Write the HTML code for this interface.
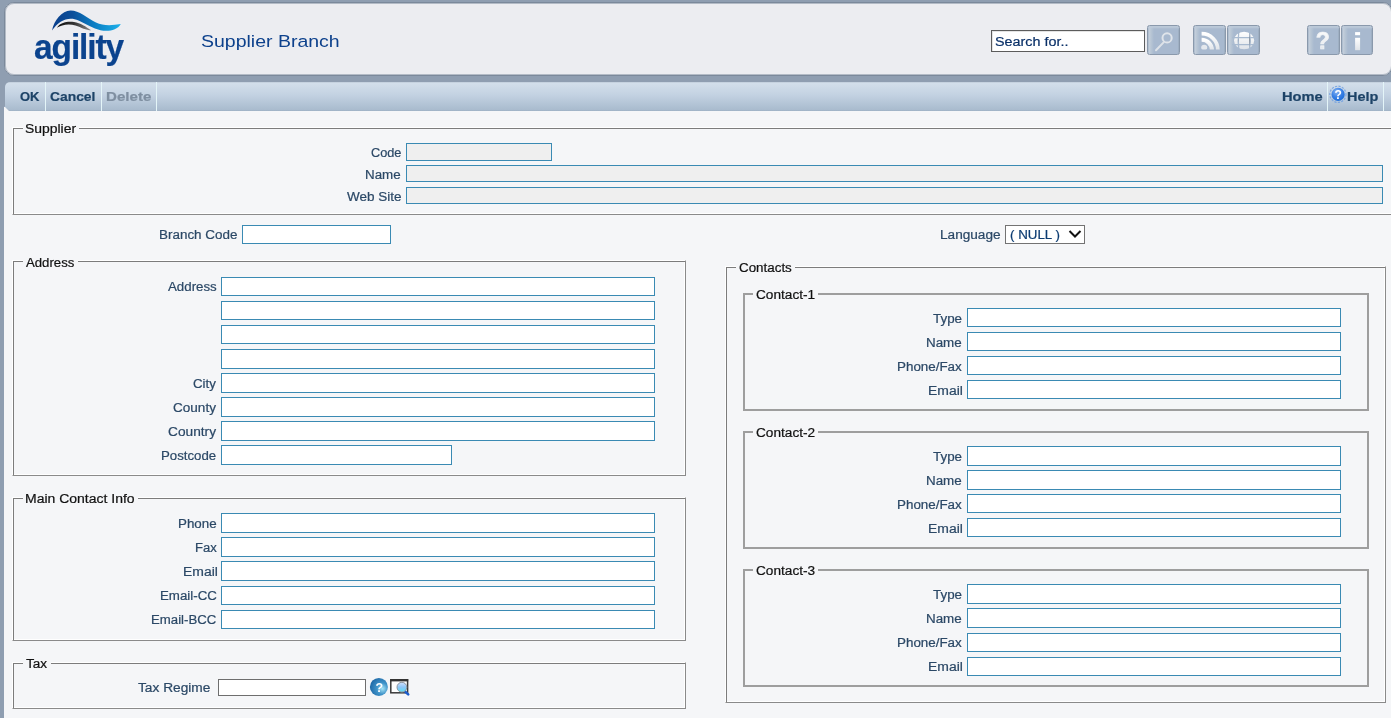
<!DOCTYPE html>
<html><head><meta charset="utf-8">
<style>
html,body{margin:0;padding:0;}
body{width:1391px;height:718px;overflow:hidden;position:relative;background:#8f9eb1;font-family:"Liberation Sans",sans-serif;}
.abs{position:absolute;}
.t{position:absolute;white-space:pre;line-height:1;display:block;transform-origin:0 0;-webkit-font-smoothing:antialiased;will-change:transform;-webkit-text-stroke:0.2px currentColor;}
#hdr{position:absolute;left:4px;top:2px;width:1387px;height:72px;background:#ecedf1;border-radius:10px;border:1px solid #7b899b;box-shadow:inset 0 0 0 1px #b3bbc6;}
#tb{position:absolute;left:5px;top:82px;width:1420px;height:29px;border-top-left-radius:5px;background:linear-gradient(#b9c6d4,#d3dfeb 1px,#c3d2e2 45%,#a9bbce 96%,#9cafc3);}
.sep{position:absolute;top:82px;width:1px;height:29px;background:#e4f5f8;}
#content{position:absolute;left:4px;top:111px;width:1400px;height:620px;background:#f5f6f8;}
.fs{position:absolute;box-sizing:border-box;border:1px solid;border-color:#fff #8a8a8a #8a8a8a #fff;box-shadow:inset 1px 1px 0 #7c7c7c,inset -1px -1px 0 #fff;}
.fs2{position:absolute;box-sizing:border-box;border:2px solid #9e9e9e;}
.lg{position:absolute;background:#f5f6f8;}
.i{position:absolute;box-sizing:border-box;border:1px solid #3a8ab3;background:#fff;}
.i.g{background:#efefef;}
.ig{position:absolute;box-sizing:border-box;border:1px solid #6e6e6e;background:#fff;}
.sel{position:absolute;box-sizing:border-box;border:1px solid #737373;background:#fff;}
.ic{position:absolute;left:-1px;top:-1px;will-change:transform;}
.hb{position:absolute;top:25px;width:33px;height:30px;box-sizing:border-box;border:1px solid #8a99ac;border-radius:2.5px;background:linear-gradient(90deg,#a6b7cb 0,#c2cdda 1.5px,#b8c6d5 3px,#a8b9cf 6px);box-shadow:inset 0 3px 2px -1px #bdcad9,inset -1px 0 0 #9cadc1;}
</style></head><body>
<div id="hdr"></div>
<div id="tb"></div>
<div id="content"></div>
<svg style="position:absolute;left:4px;top:105px" width="6" height="6" viewBox="0 0 6 6"><path d="M0 6 V2 Q0.6 1.6 1.2 2.2 L5 6 Z" fill="#f5f6f8"/></svg>
<div class="fs" style="left:12px;top:127px;width:1389px;height:88px"></div>
<div class="lg" style="left:23px;top:126px;width:56px;height:5px"></div>
<div class="i g" style="left:406px;top:143px;width:146px;height:18px"></div>
<div class="i g" style="left:406px;top:165px;width:977px;height:17px"></div>
<div class="i g" style="left:406px;top:187px;width:977px;height:17px"></div>
<div class="i" style="left:242px;top:225px;width:149px;height:19px"></div>
<div class="sel" style="left:1005px;top:225px;width:80px;height:19px"></div>
<svg style="position:absolute;left:1068px;top:229px" width="14" height="10" viewBox="0 0 14 10"><path d="M1.5 2 L7 7.5 L12.5 2" fill="none" stroke="#111" stroke-width="2"/></svg>
<div class="fs" style="left:12px;top:260px;width:674px;height:216px"></div>
<div class="lg" style="left:23px;top:259px;width:55px;height:5px"></div>
<div class="i" style="left:221px;top:277px;width:434px;height:19px"></div>
<div class="i" style="left:221px;top:301px;width:434px;height:19px"></div>
<div class="i" style="left:221px;top:325px;width:434px;height:19px"></div>
<div class="i" style="left:221px;top:349px;width:434px;height:20px"></div>
<div class="i" style="left:221px;top:373px;width:434px;height:20px"></div>
<div class="i" style="left:221px;top:397px;width:434px;height:20px"></div>
<div class="i" style="left:221px;top:421px;width:434px;height:20px"></div>
<div class="i" style="left:221px;top:445px;width:231px;height:20px"></div>
<div class="fs" style="left:12px;top:497px;width:674px;height:144px"></div>
<div class="lg" style="left:23px;top:496px;width:115px;height:5px"></div>
<div class="i" style="left:221px;top:513px;width:434px;height:20px"></div>
<div class="i" style="left:221px;top:537px;width:434px;height:20px"></div>
<div class="i" style="left:221px;top:561px;width:434px;height:20px"></div>
<div class="i" style="left:221px;top:586px;width:434px;height:19px"></div>
<div class="i" style="left:221px;top:610px;width:434px;height:19px"></div>
<div class="fs" style="left:12px;top:662px;width:674px;height:47px"></div>
<div class="lg" style="left:23px;top:661px;width:28px;height:5px"></div>
<div class="ig" style="left:218px;top:679px;width:148px;height:17px"></div>
<svg style="position:absolute;left:368px;top:676px;will-change:transform" width="44" height="22" viewBox="0 0 44 22">
<defs><radialGradient id="tq" cx="0.7" cy="0.6" r="0.7"><stop offset="0" stop-color="#a6e4f6"/><stop offset="0.45" stop-color="#3f93c9"/><stop offset="1" stop-color="#1f6aa8"/></radialGradient>
<linearGradient id="ln" x1="0" y1="0" x2="0" y2="1"><stop offset="0" stop-color="#d2e2ff"/><stop offset="0.5" stop-color="#8ec6f8"/><stop offset="1" stop-color="#58e0f6"/></linearGradient></defs>
<circle cx="10.9" cy="10.9" r="9" fill="url(#tq)"/>
<text x="7.4" y="16" font-family="Liberation Sans" font-weight="bold" font-size="12.5" fill="#fff">?</text>
<rect x="22.8" y="3.8" width="16.8" height="13" fill="#fff" stroke="#3a3a3a" stroke-width="1.5"/>
<rect x="22.2" y="3" width="18" height="2.4" fill="#333"/>
<path d="M37.2 15.6 L40.2 18.4" stroke="#1a5ccc" stroke-width="2.6" stroke-linecap="round"/>
<circle cx="33.9" cy="11.2" r="4.9" fill="url(#ln)" stroke="#8a949e" stroke-width="1"/>
</svg>
<div class="fs" style="left:725px;top:266px;width:661px;height:437px"></div>
<div class="lg" style="left:736px;top:265px;width:59px;height:5px"></div>
<div class="fs2" style="left:743px;top:293px;width:626px;height:118px"></div>
<div class="lg" style="left:753px;top:292px;width:65px;height:5px"></div>
<div class="i" style="left:967px;top:308px;width:374px;height:19px"></div>
<div class="i" style="left:967px;top:332px;width:374px;height:19px"></div>
<div class="i" style="left:967px;top:356px;width:374px;height:19px"></div>
<div class="i" style="left:967px;top:380px;width:374px;height:19px"></div>
<div class="fs2" style="left:743px;top:431px;width:626px;height:118px"></div>
<div class="lg" style="left:753px;top:430px;width:65px;height:5px"></div>
<div class="i" style="left:967px;top:446px;width:374px;height:20px"></div>
<div class="i" style="left:967px;top:470px;width:374px;height:20px"></div>
<div class="i" style="left:967px;top:494px;width:374px;height:19px"></div>
<div class="i" style="left:967px;top:518px;width:374px;height:19px"></div>
<div class="fs2" style="left:743px;top:569px;width:626px;height:118px"></div>
<div class="lg" style="left:753px;top:568px;width:65px;height:5px"></div>
<div class="i" style="left:967px;top:584px;width:374px;height:20px"></div>
<div class="i" style="left:967px;top:608px;width:374px;height:20px"></div>
<div class="i" style="left:967px;top:633px;width:374px;height:19px"></div>
<div class="i" style="left:967px;top:657px;width:374px;height:19px"></div>

<svg style="position:absolute;left:30px;top:5px;will-change:transform" width="100" height="67" viewBox="0 0 100 67">
<defs>
<linearGradient id="bw" x1="0" y1="0" x2="1" y2="0"><stop offset="0" stop-color="#0b3f8c"/><stop offset="0.3" stop-color="#0a4f9a"/><stop offset="0.6" stop-color="#0a7cc2"/><stop offset="1" stop-color="#1cb0ea"/></linearGradient>
<linearGradient id="gw" x1="0" y1="0" x2="1" y2="0"><stop offset="0" stop-color="#0d0d0d"/><stop offset="0.5" stop-color="#333"/><stop offset="1" stop-color="#8a8a8a"/></linearGradient>
</defs>
<path d="M22 25.6 C24 15 32 5.5 40.5 5.4 C49 5.3 57 12.6 66 17.6 C73 21 82 20.6 90.8 19 C87 25.6 78 26.8 70.5 25.2 C63 23.5 56 18.8 48.5 15.4 C39 11 29 15 22 25.6 Z" fill="url(#bw)"/>
<path d="M26.8 22.8 C30 17.6 37 16 44 16.9 C50.5 17.8 56 21.6 61.2 25.3 C56 25.2 51.5 22.6 45.5 20.5 C38.5 18.4 31.5 19.8 26.8 22.8 Z" fill="url(#gw)"/>
<text transform="translate(4 53.6) scale(1 1.035)" x="0" y="0" font-family="Liberation Sans" font-weight="bold" font-size="33.5" fill="#0b438e" stroke="#0b438e" stroke-width="0.2" letter-spacing="-1.1">agility</text>
</svg>
<div class="abs" style="left:991px;top:30px;width:154px;height:22px;box-sizing:border-box;border:1px solid #5c5c5c;background:#fff;box-shadow:inset 1px 1px 0 #e4e4e4;"></div>
<svg width="0" height="0" style="position:absolute"><defs>
<linearGradient id="wg" x1="0" y1="0" x2="0" y2="1"><stop offset="0" stop-color="#ffffff"/><stop offset="1" stop-color="#dfe3e8"/></linearGradient>
</defs></svg>
<div class="hb" style="left:1147px"><svg class="ic" width="33" height="30" viewBox="0 0 33 30"><circle cx="20.1" cy="12.9" r="4.6" fill="none" stroke="#dfe4ea" stroke-width="2"/><path d="M9 25.2 L16.6 17.4" stroke="#dde2e8" stroke-width="2" stroke-linecap="round"/></svg></div>
<div class="hb" style="left:1193px"><svg class="ic" width="33" height="30" viewBox="0 0 33 30"><defs><clipPath id="rc"><rect x="7.9" y="4" width="22" height="20.5"/></clipPath></defs><g clip-path="url(#rc)"><g fill="none" stroke="url(#wg)"><path d="M8.6 14.7 A10.3 10.3 0 0 1 18.9 25" stroke-width="4.1"/><path d="M8.6 8.7 A16.3 16.3 0 0 1 24.9 25" stroke-width="3.8"/></g><ellipse cx="11.2" cy="22.4" rx="3" ry="2.6" fill="#e4e8ed"/></g></svg></div>
<div class="hb" style="left:1227px"><svg class="ic" width="33" height="30" viewBox="0 0 33 30"><ellipse cx="17.1" cy="15.5" rx="10.1" ry="8.7" fill="url(#wg)"/><g stroke="#a8bad0" stroke-width="1.3"><path d="M5 12.7 H29 M5 19.7 H29"/><path d="M11.9 5 Q10.5 15.5 11.9 26 M22.5 5 Q23.9 15.5 22.5 26"/></g></svg></div>
<div class="hb" style="left:1307px"><svg class="ic" width="33" height="30" viewBox="0 0 33 30"><text x="8.8" y="23.8" font-family="Liberation Sans" font-weight="bold" font-size="23" fill="url(#wg)" stroke="#f0f2f5" stroke-width="0.7">?</text></svg></div>
<div class="hb" style="left:1341px;width:32px"><svg class="ic" width="32" height="30" viewBox="0 0 32 30"><rect x="14.1" y="7.1" width="5" height="3.1" fill="#fff"/><rect x="14.1" y="12.8" width="5" height="12.4" fill="url(#wg)"/></svg></div>
<div class="sep" style="left:45px"></div>
<div class="sep" style="left:101px"></div>
<div class="sep" style="left:156px"></div>
<div class="sep" style="left:1327px"></div>
<div class="sep" style="left:1383px"></div>
<svg style="position:absolute;left:1328px;top:85px;will-change:transform" width="20" height="19" viewBox="0 0 20 19">
<defs><radialGradient id="hg" cx="0.4" cy="0.3" r="0.8"><stop offset="0" stop-color="#8ab6f2"/><stop offset="0.5" stop-color="#3b82e6"/><stop offset="1" stop-color="#1366d6"/></radialGradient></defs>
<circle cx="9.9" cy="9.3" r="8.1" fill="none" stroke="#6f9fe0" stroke-width="1.2" stroke-dasharray="2.2 1.3" opacity="0.85"/>
<circle cx="10.1" cy="9.4" r="6.6" fill="url(#hg)"/>
<text x="6.6" y="14.3" font-family="Liberation Sans" font-weight="bold" font-size="12" fill="#fff">?</text>
</svg>

<span class="t" style="left:200.80px;top:32.60px;font-size:16.3px;font-weight:normal;color:#0d418c;transform:scaleX(1.1974);-webkit-text-stroke:0">Supplier Branch</span>
<span class="t" style="left:995.45px;top:36.32px;font-size:12.5px;font-weight:normal;color:#0a3068;transform:scaleX(1.1484)">Search for..</span>
<span class="t" style="left:20.20px;top:90.54px;font-size:12px;font-weight:bold;color:#1d4367;transform:scaleX(1.0833)">OK</span>
<span class="t" style="left:50.10px;top:90.54px;font-size:12px;font-weight:bold;color:#1d4367;transform:scaleX(1.1538)">Cancel</span>
<span class="t" style="left:105.70px;top:90.54px;font-size:12px;font-weight:bold;color:#7f8fa1;transform:scaleX(1.2583)">Delete</span>
<span class="t" style="left:1281.70px;top:90.54px;font-size:12px;font-weight:bold;color:#1d4367;transform:scaleX(1.2212)">Home</span>
<span class="t" style="left:1347.40px;top:90.54px;font-size:12px;font-weight:bold;color:#1d4367;transform:scaleX(1.2038)">Help</span>
<span class="t" style="left:371.00px;top:146.84px;font-size:12px;font-weight:normal;color:#2b4866;transform:scaleX(1.0607)">Code</span>
<span class="t" style="left:365.09px;top:168.84px;font-size:12px;font-weight:normal;color:#2b4866;transform:scaleX(1.1129)">Name</span>
<span class="t" style="left:346.70px;top:190.84px;font-size:12px;font-weight:normal;color:#2b4866;transform:scaleX(1.1250)">Web Site</span>
<span class="t" style="left:158.78px;top:228.84px;font-size:12px;font-weight:normal;color:#2b4866;transform:scaleX(1.1203)">Branch Code</span>
<span class="t" style="left:939.87px;top:228.84px;font-size:12px;font-weight:normal;color:#2b4866;transform:scaleX(1.1346)">Language</span>
<span class="t" style="left:1010.00px;top:228.84px;font-size:12px;font-weight:normal;color:#0c3c72;transform:scaleX(1.1111)">( NULL )</span>
<span class="t" style="left:167.60px;top:280.84px;font-size:12px;font-weight:normal;color:#2b4866;transform:scaleX(1.1068)">Address</span>
<span class="t" style="left:193.00px;top:377.84px;font-size:12px;font-weight:normal;color:#2b4866;transform:scaleX(1.1095)">City</span>
<span class="t" style="left:173.40px;top:401.84px;font-size:12px;font-weight:normal;color:#2b4866;transform:scaleX(1.1289)">County</span>
<span class="t" style="left:168.30px;top:425.84px;font-size:12px;font-weight:normal;color:#2b4866;transform:scaleX(1.1429)">Country</span>
<span class="t" style="left:161.20px;top:449.84px;font-size:12px;font-weight:normal;color:#2b4866;transform:scaleX(1.1020)">Postcode</span>
<span class="t" style="left:178.49px;top:517.84px;font-size:12px;font-weight:normal;color:#2b4866;transform:scaleX(1.1121)">Phone</span>
<span class="t" style="left:194.51px;top:541.84px;font-size:12px;font-weight:normal;color:#2b4866;transform:scaleX(1.0895)">Fax</span>
<span class="t" style="left:182.64px;top:565.84px;font-size:12px;font-weight:normal;color:#2b4866;transform:scaleX(1.1607)">Email</span>
<span class="t" style="left:159.79px;top:589.84px;font-size:12px;font-weight:normal;color:#2b4866;transform:scaleX(1.1080)">Email-CC</span>
<span class="t" style="left:151.40px;top:613.84px;font-size:12px;font-weight:normal;color:#2b4866;transform:scaleX(1.1000)">Email-BCC</span>
<span class="t" style="left:138.40px;top:681.84px;font-size:12px;font-weight:normal;color:#2b4866;transform:scaleX(1.1429)">Tax Regime</span>
<span class="t" style="left:933.10px;top:312.84px;font-size:12px;font-weight:normal;color:#2b4866;transform:scaleX(1.1154)">Type</span>
<span class="t" style="left:926.38px;top:336.84px;font-size:12px;font-weight:normal;color:#2b4866;transform:scaleX(1.1161)">Name</span>
<span class="t" style="left:897.38px;top:360.84px;font-size:12px;font-weight:normal;color:#2b4866;transform:scaleX(1.1158)">Phone/Fax</span>
<span class="t" style="left:928.44px;top:384.84px;font-size:12px;font-weight:normal;color:#2b4866;transform:scaleX(1.1607)">Email</span>
<span class="t" style="left:933.10px;top:450.84px;font-size:12px;font-weight:normal;color:#2b4866;transform:scaleX(1.1154)">Type</span>
<span class="t" style="left:926.38px;top:474.84px;font-size:12px;font-weight:normal;color:#2b4866;transform:scaleX(1.1161)">Name</span>
<span class="t" style="left:897.38px;top:498.84px;font-size:12px;font-weight:normal;color:#2b4866;transform:scaleX(1.1158)">Phone/Fax</span>
<span class="t" style="left:928.44px;top:522.84px;font-size:12px;font-weight:normal;color:#2b4866;transform:scaleX(1.1607)">Email</span>
<span class="t" style="left:933.10px;top:588.84px;font-size:12px;font-weight:normal;color:#2b4866;transform:scaleX(1.1154)">Type</span>
<span class="t" style="left:926.38px;top:612.84px;font-size:12px;font-weight:normal;color:#2b4866;transform:scaleX(1.1161)">Name</span>
<span class="t" style="left:897.38px;top:636.84px;font-size:12px;font-weight:normal;color:#2b4866;transform:scaleX(1.1158)">Phone/Fax</span>
<span class="t" style="left:928.44px;top:660.84px;font-size:12px;font-weight:normal;color:#2b4866;transform:scaleX(1.1607)">Email</span>
<span class="t" style="left:24.74px;top:122.84px;font-size:12px;font-weight:normal;color:#111;transform:scaleX(1.1605)">Supplier</span>
<span class="t" style="left:25.90px;top:256.84px;font-size:12px;font-weight:normal;color:#111;transform:scaleX(1.0977)">Address</span>
<span class="t" style="left:24.83px;top:492.84px;font-size:12px;font-weight:normal;color:#111;transform:scaleX(1.1656)">Main Contact Info</span>
<span class="t" style="left:26.00px;top:657.84px;font-size:12px;font-weight:normal;color:#111;transform:scaleX(1.1316)">Tax</span>
<span class="t" style="left:738.90px;top:261.84px;font-size:12px;font-weight:normal;color:#111;transform:scaleX(1.1149)">Contacts</span>
<span class="t" style="left:755.60px;top:288.84px;font-size:12px;font-weight:normal;color:#111;transform:scaleX(1.1365)">Contact-1</span>
<span class="t" style="left:755.60px;top:426.84px;font-size:12px;font-weight:normal;color:#111;transform:scaleX(1.1365)">Contact-2</span>
<span class="t" style="left:755.60px;top:564.84px;font-size:12px;font-weight:normal;color:#111;transform:scaleX(1.1365)">Contact-3</span>
</body></html>
